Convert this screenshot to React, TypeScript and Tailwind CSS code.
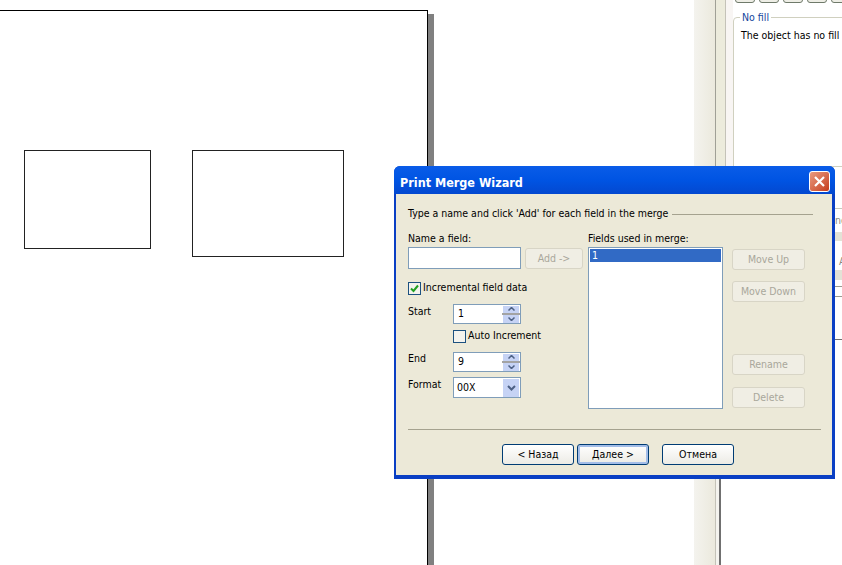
import React from "react";

const font = { fontFamily: '"DejaVu Sans Condensed", "DejaVu Sans", "Noto Sans", sans-serif' };

function DisabledBtn({ label, cls }: { label: string; cls: string }) {
  return (
    <div className={`h-[21px] flex items-center justify-center rounded-[3px] border border-[#d8d5c6] bg-[#f0eee4] text-[#a9a79b] ${cls}`}>
      {label}
    </div>
  );
}

function NavBtn({ label, active }: { label: string; active?: boolean }) {
  return (
    <div className={`w-[72px] h-[21px] flex items-center justify-center rounded-[3px] border border-[#003c74] bg-gradient-to-b from-white to-[#ecebe5] text-black ${active ? "shadow-[inset_0_0_0_2px_#a3bde8]" : ""}`}>
      {label}
    </div>
  );
}

function Spin() {
  return (
    <div className="w-[16px] h-[17px] flex flex-col">
      <div className="flex-1 bg-[#c6d3f5] flex items-center justify-center">
        <svg width="7" height="4" viewBox="0 0 7 4"><path d="M0.5 3.5 3.5 0.5 6.5 3.5" fill="none" stroke="#4d6185" strokeWidth="1.5" /></svg>
      </div>
      <div className="h-[2px] bg-[#a3a3a3] -mx-px" />
      <div className="flex-1 bg-[#c6d3f5] flex items-center justify-center">
        <svg width="7" height="4" viewBox="0 0 7 4"><path d="M0.5 0.5 3.5 3.5 6.5 0.5" fill="none" stroke="#4d6185" strokeWidth="1.5" /></svg>
      </div>
    </div>
  );
}

function Dialog() {
  return (
    <div className="absolute left-[394px] top-[166px] w-[441px] h-[313px] flex flex-col rounded-t-[6px] bg-[#0a3fc4] pl-[2px] pr-[3px] pb-[4px]" style={font}>
      <div className="h-[28px] shrink-0 -ml-[2px] -mr-[3px] flex items-center justify-between pl-[6px] pr-[5px] rounded-t-[6px] bg-gradient-to-b from-[#0a5ce8] via-[#0054e3] to-[#0348d0]">
        <span className="text-[12.5px] font-bold text-white mt-[6px]">Print Merge Wizard</span>
        <div className="w-[21px] h-[21px] mt-[3px] rounded-[3px] border border-white bg-gradient-to-br from-[#e89a80] to-[#c53a17] flex items-center justify-center">
          <svg width="13" height="13" viewBox="0 0 13 13"><path d="M2 2 11 11M11 2 2 11" stroke="white" strokeWidth="2.2" /></svg>
        </div>
      </div>
      <div className="flex-1 bg-[#ece9d8] text-[10.5px] text-black flex flex-col pl-[12px] pr-[11px]">
        <div className="flex items-center gap-[4px] h-[14px] mt-[13px]">
          <span className="whitespace-nowrap">Type a name and click 'Add' for each field in the merge</span>
          <div className="flex-1 h-px bg-[#a5a28f] mr-[8px]" />
        </div>
        <div className="flex mt-[9px] h-[199px] shrink-0">
          <div className="w-[180px] shrink-0 flex flex-col">
            <div className="h-[16px] leading-[16px]">Name a field:</div>
            <div className="flex gap-[4px] mt-px">
              <div className="w-[113px] h-[22px] shrink-0 bg-white border border-[#7f9db9]" />
              <DisabledBtn label="Add ->" cls="w-[58px] shrink-0 mt-px" />
            </div>
            <div className="flex items-center gap-[2px] mt-[12px] h-[14px]">
              <div className="w-[13px] h-[13px] bg-[#f4f3ee] border border-[#1c5180] flex items-center justify-center">
                <svg width="9" height="9" viewBox="0 0 9 9"><path d="M1 4.5 3.5 7 8 1.5" fill="none" stroke="#21a121" strokeWidth="2" /></svg>
              </div>
              <span>Incremental field data</span>
            </div>
            <div className="flex mt-[9px]">
              <div className="w-[45px] h-[15px]">Start</div>
              <div className="w-[68px] h-[20px] bg-white border border-[#7f9db9] flex items-center justify-between pl-[4px] pr-px">
                <span>1</span>
                <Spin />
              </div>
            </div>
            <div className="flex items-center gap-[2px] ml-[45px] mt-[5px] h-[14px]">
              <div className="w-[13px] h-[13px] bg-[#f4f3ee] border border-[#1c5180]" />
              <span>Auto Increment</span>
            </div>
            <div className="flex mt-[9px]">
              <div className="w-[45px] h-[15px] -mt-px">End</div>
              <div className="w-[68px] h-[20px] bg-white border border-[#7f9db9] flex items-center justify-between pl-[4px] pr-px">
                <span>9</span>
                <Spin />
              </div>
            </div>
            <div className="flex mt-[5px]">
              <div className="w-[45px] h-[15px]">Format</div>
              <div className="w-[68px] h-[21px] bg-white border border-[#7f9db9] flex items-center justify-between pl-[3px] pr-px">
                <span className="mt-px">00X</span>
                <div className="w-[16px] h-[18px] bg-[#c6d3f5] flex items-center justify-center">
                  <svg width="9" height="6" viewBox="0 0 9 6"><path d="M1 1 4.5 4.5 8 1" fill="none" stroke="#4d6185" strokeWidth="2" /></svg>
                </div>
              </div>
            </div>
          </div>
          <div className="flex flex-col w-[135px] shrink-0">
            <div className="h-[16px] leading-[16px] whitespace-nowrap">Fields used in merge:</div>
            <div className="mt-px w-[135px] h-[162px] bg-white border border-[#7f9db9] p-px">
              <div className="h-[13px] leading-[13px] bg-[#316ac5] text-white pl-[2px]">1</div>
            </div>
          </div>
          <div className="ml-[9px] flex flex-col pt-[19px]">
            <DisabledBtn label="Move Up" cls="w-[73px]" />
            <DisabledBtn label="Move Down" cls="w-[73px] mt-[11px]" />
            <DisabledBtn label="Rename" cls="w-[73px] mt-[52px]" />
            <DisabledBtn label="Delete" cls="w-[73px] mt-[12px]" />
          </div>
        </div>
        <div className="h-px bg-[#a5a28f] shrink-0" />
        <div className="flex mt-[14px] ml-[94px]">
          <NavBtn label="< Назад" />
          <div className="ml-[3px]"><NavBtn label="Далее >" active /></div>
          <div className="ml-[13px]"><NavBtn label="Отмена" /></div>
        </div>
      </div>
    </div>
  );
}

export default function App() {
  return (
    <div className="relative w-[842px] h-[565px] overflow-hidden bg-white" style={font}>
      {/* Page on the canvas */}
      <div className="absolute left-[-10px] top-[10px] w-[438px] h-[600px] border border-black bg-white" />
      <div className="absolute left-[428px] top-[14px] w-[6px] h-[560px] bg-[#808080]" />
      <div className="absolute left-[24px] top-[150px] w-[127px] h-[99px] border border-[#222]" />
      <div className="absolute left-[192px] top-[150px] w-[152px] h-[107px] border border-[#222]" />

      {/* Docker on the right */}
      <div className="absolute left-[694px] top-0 w-[148px] h-[565px] flex flex-col bg-white text-[10.5px] text-black">
        {/* upper part: fill panel */}
        <div className="h-[340px] flex shrink-0">
          <div className="w-[21px] shrink-0 bg-gradient-to-r from-[#f4f3ee] to-[#ebe9dd]" />
          <div className="w-px shrink-0 bg-[#a0a096]" />
          <div className="w-[9px] shrink-0 bg-[#ecebdc]" />
          <div className="w-px shrink-0 bg-[#c4c2b8]" />
          <div className="w-[7px] shrink-0 bg-[#f8f5f3]" />
          <div className="flex-1 min-w-0 relative">
            <div className="flex gap-[4px] pl-[2px] -mt-[8px] h-[11px]">
              {[0, 1, 2, 3, 4].map((i) => (
                <div key={i} className="w-[20px] h-[11px] shrink-0 rounded-[3px] border border-[#6f7a6a] bg-[#eeeee6]" />
              ))}
            </div>
            <div className="absolute left-0 top-[17px] w-[200px] h-[150px] border border-[#d0d0bf] rounded-tl-[4px]" />
            <div className="absolute left-[7px] top-[10px] bg-white px-[2px] text-[#14449c] leading-[15px]">No fill</div>
            <div className="absolute left-[8px] top-[28px] whitespace-nowrap leading-[15px]">The object has no fill</div>
            {/* rows showing beyond the dialog */}
            <div className="absolute right-0 top-[208px] w-[7px] h-px bg-[#c8c8bc]" />
            <div className="absolute left-[102px] top-[213px] text-[#8a8a80] leading-[14px] whitespace-nowrap">nc</div>
            <div className="absolute right-0 top-[232px] w-[7px] h-[9px] bg-[#e3e2d6]" />
            <div className="absolute left-[106px] top-[254px] text-[#8a8a80] leading-[14px]">A</div>
            <div className="absolute right-0 top-[270px] w-[7px] h-[10px] bg-[#e3e2d6]" />
            <div className="absolute right-0 top-[286px] w-[7px] h-px bg-[#9a9a90]" />
            <div className="absolute right-0 top-[296px] w-[7px] h-px bg-[#9a9a90]" />
            <div className="absolute right-0 top-[339px] w-[7px] h-px bg-[#707070]" />
          </div>
        </div>
        {/* lower part */}
        <div className="flex-1 flex">
          <div className="w-[21px] bg-gradient-to-r from-[#f4f3ee] to-[#ebe9dd]" />
          <div className="w-px bg-[#c4c2b8]" />
          <div className="w-[3px] bg-[#f4f3ee]" />
          <div className="w-[2px] bg-[#707070]" />
        </div>
      </div>

      <Dialog />
    </div>
  );
}
